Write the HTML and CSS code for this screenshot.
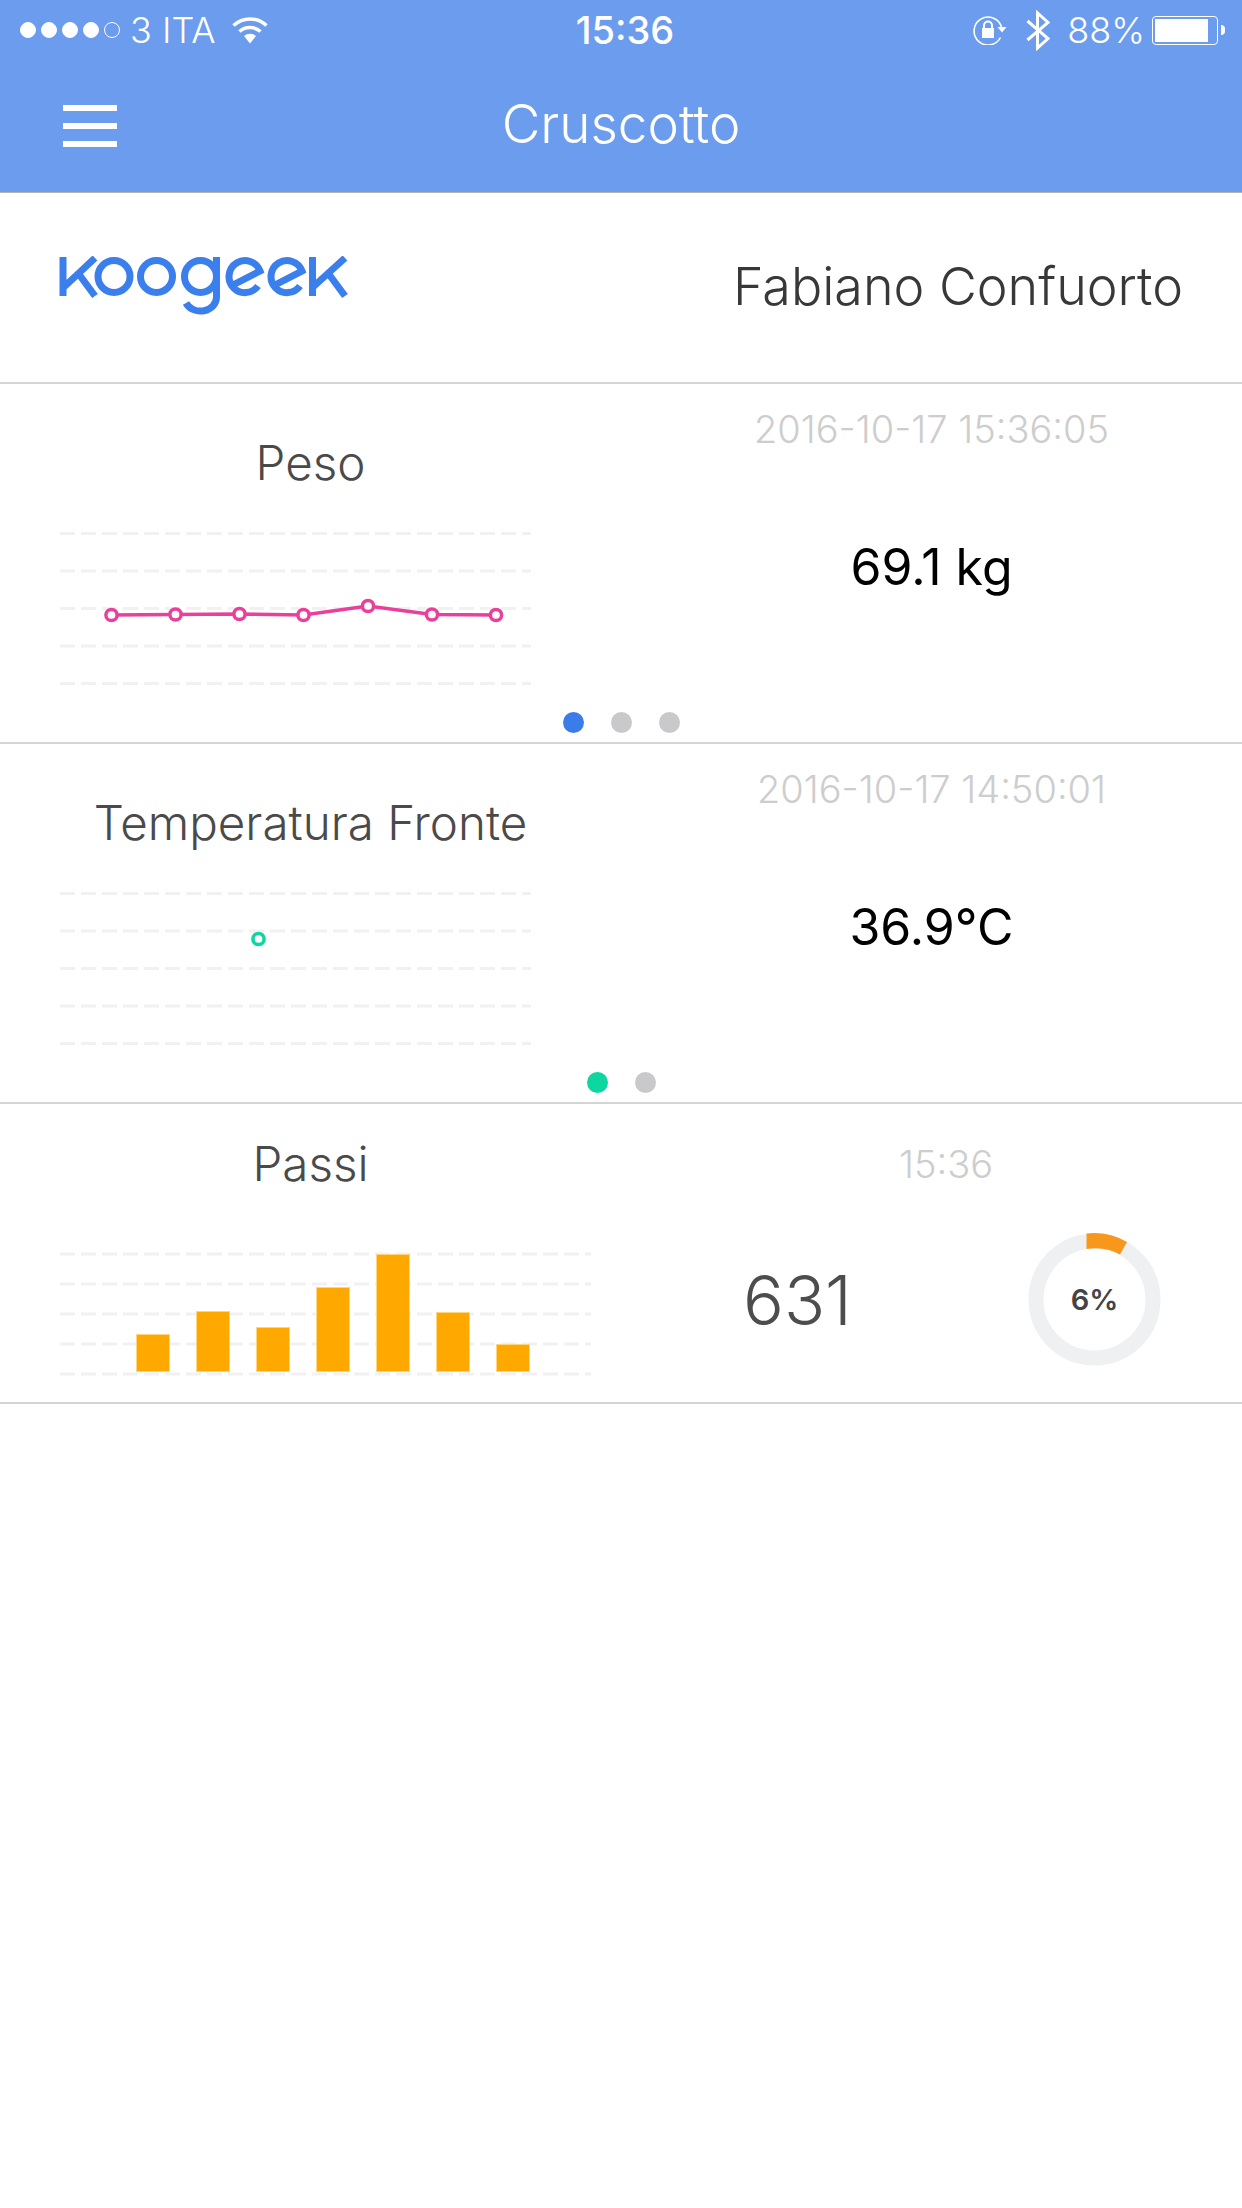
FILE: index.html
```html
<!DOCTYPE html>
<html lang="it">
<head>
    <meta charset="UTF-8">
    <meta name="viewport" content="width=device-width, initial-scale=1.0">
    <title>Cruscotto</title>
    <link rel="stylesheet" href="styles.css">
</head>
<body>
    <header class="topbar">
        <div class="status">
            <div class="status-left">
                <span class="signal">
                    <i class="on"></i><i class="on"></i><i class="on"></i><i class="on"></i><i></i>
                </span>
                <span class="carrier">3 ITA</span>
                <svg class="wifi" width="36" height="28" viewBox="0 0 36 28">
                    <path d="M1.5 9.5 A24 24 0 0 1 34.5 9.5" fill="none" stroke="#fff" stroke-width="3.6"/>
                    <path d="M7.5 15.5 A16 16 0 0 1 28.5 15.5" fill="none" stroke="#fff" stroke-width="3.6"/>
                    <path d="M12 20 L18 27.5 L24 20 A9 9 0 0 0 12 20 Z" fill="#fff"/>
                </svg>
            </div>
            <div class="clock">15:36</div>
            <div class="status-right">
                <svg class="lock" width="34" height="30" viewBox="0 0 34 30">
                    <path d="M27.5 22.5 A14 14 0 1 1 28.5 12" fill="none" stroke="#fff" stroke-width="1.6"/>
                    <path d="M24.5 12 H33.5 L29 17.5 Z" fill="#fff"/>
                    <rect x="9" y="13" width="12" height="10" fill="#fff"/>
                    <path d="M11 13 V10.5 A4 4 0 0 1 19 10.5 V13" fill="none" stroke="#fff" stroke-width="2"/>
                </svg>
                <svg class="bluetooth" width="24" height="41" viewBox="0 0 24 41">
                    <path d="M1.5 11 L22 28.5 L11.5 38 V3 L22 12.5 L1.5 30" fill="none" stroke="#fff" stroke-width="3"/>
                </svg>
                <span class="percent">88%</span>
                <span class="battery"><span class="battery-fill"></span></span>
                <span class="battery-tip"></span>
            </div>
        </div>
        <nav class="navbar">
            <div class="menu"><span></span><span></span><span></span></div>
            <h1>Cruscotto</h1>
        </nav>
    </header>

    <section class="profile">
        <svg class="logo" width="290" height="60" viewBox="59 257 290 60" role="img" aria-label="koogeek">
            <g fill="none" stroke="#3a7fec" stroke-width="7">
                <path d="M63 258 V297 M95 259 L64 288 M78 274 L95 297"/>
                <circle cx="114" cy="277.5" r="16"/>
                <circle cx="156.5" cy="277.5" r="16"/>
                <circle cx="200.5" cy="277.5" r="16"/>
                <path d="M216.5 258 V298 A16 14 0 0 1 186 304"/>
                <path d="M231 287 L260 272 A16 16 0 1 0 258 287"/>
                <path d="M273 287 L302 272 A16 16 0 1 0 300 287"/>
                <path d="M312.5 258 V297 M345 259 L313 288 M328 274 L345 297"/>
            </g>
        </svg>
        <div class="user-name">Fabiano Confuorto</div>
    </section>

    <section class="row">
        <div class="row-main">
            <div class="col-left">
                <h2>Peso</h2>
                <svg class="chart" width="471" height="170" viewBox="0 0 471 170">
                    <g class="grid-lines">
                        <line x1="0" x2="471" y1="10.5" y2="10.5"/>
                        <line x1="0" x2="471" y1="48" y2="48"/>
                        <line x1="0" x2="471" y1="85.5" y2="85.5"/>
                        <line x1="0" x2="471" y1="123" y2="123"/>
                        <line x1="0" x2="471" y1="160.5" y2="160.5"/>
                    </g>
                    <polyline class="line-pink" points="51.5,92 115.5,91.5 179.5,91 243.5,92 308,83 372,91.5 436,92"/>
                    <g class="points-pink">
                        <circle cx="51.5" cy="92" r="5.6"/>
                        <circle cx="115.5" cy="91.5" r="5.6"/>
                        <circle cx="179.5" cy="91" r="5.6"/>
                        <circle cx="243.5" cy="92" r="5.6"/>
                        <circle cx="308" cy="83" r="5.6"/>
                        <circle cx="372" cy="91.5" r="5.6"/>
                        <circle cx="436" cy="92" r="5.6"/>
                    </g>
                </svg>
            </div>
            <div class="col-right">
                <div class="stamp">2016-10-17 15:36:05</div>
                <div class="reading">69.1 kg</div>
            </div>
        </div>
        <div class="pager">
            <span class="dot dot-blue"></span><span class="dot"></span><span class="dot"></span>
        </div>
    </section>

    <section class="row">
        <div class="row-main">
            <div class="col-left">
                <h2>Temperatura Fronte</h2>
                <svg class="chart" width="471" height="170" viewBox="0 0 471 170">
                    <g class="grid-lines">
                        <line x1="0" x2="471" y1="10.5" y2="10.5"/>
                        <line x1="0" x2="471" y1="48" y2="48"/>
                        <line x1="0" x2="471" y1="85.5" y2="85.5"/>
                        <line x1="0" x2="471" y1="123" y2="123"/>
                        <line x1="0" x2="471" y1="160.5" y2="160.5"/>
                    </g>
                    <circle class="point-green" cx="198.5" cy="56" r="5.6"/>
                </svg>
            </div>
            <div class="col-right">
                <div class="stamp">2016-10-17 14:50:01</div>
                <div class="reading">36.9°C</div>
            </div>
        </div>
        <div class="pager">
            <span class="dot dot-green"></span><span class="dot"></span>
        </div>
    </section>

    <section class="row row-steps">
        <div class="col-left">
            <h2>Passi</h2>
            <svg class="chart" width="531" height="140" viewBox="0 0 531 140">
                <g class="grid-lines">
                    <line x1="0" x2="531" y1="10" y2="10"/>
                    <line x1="0" x2="531" y1="40" y2="40"/>
                    <line x1="0" x2="531" y1="70" y2="70"/>
                    <line x1="0" x2="531" y1="100" y2="100"/>
                    <line x1="0" x2="531" y1="130" y2="130"/>
                </g>
                <g class="bars">
                    <rect x="76.5" y="90.5" width="33" height="37"/>
                    <rect x="136.5" y="67.5" width="33" height="60"/>
                    <rect x="196.5" y="83.5" width="33" height="44"/>
                    <rect x="256.5" y="43.5" width="33" height="84"/>
                    <rect x="316.5" y="10.5" width="33" height="117"/>
                    <rect x="376.5" y="68.5" width="33" height="59"/>
                    <rect x="436.5" y="100.5" width="33" height="27"/>
                </g>
            </svg>
        </div>
        <div class="col-steps">
            <div class="stamp">15:36</div>
            <div class="steps-body">
                <div class="steps-count">631</div>
                <svg class="ring" width="133" height="133" viewBox="0 0 133 133">
                    <circle cx="66.5" cy="66.5" r="58.5" fill="none" stroke="#eff0f2" stroke-width="15"/>
                    <path d="M58.5 0.5 A66 66 0 0 1 99 9 L92 21.5 A51 51 0 0 0 58.5 16 Z" fill="#f7981c"/>
                    <text class="ring-label" x="66.5" y="77" text-anchor="middle">6%</text>
                </svg>
            </div>
        </div>
    </section>
</body>
</html>
```

FILE: styles.css
```css
body {
    margin: 0;
    background: #fff;
    font-family: Inter, Roboto, "Liberation Sans", sans-serif;
    font-weight: 300;
}
.topbar {
    background: #6c9cee;
    color: #fff;
    border-bottom: 1px solid #b4b4b4;
}
.status {
    height: 60px;
    display: grid;
    grid-template-columns: 1fr auto 1fr;
    align-items: center;
    font-size: 36px;
}
.status-left {
    display: flex;
    align-items: center;
    padding-left: 20px;
}
.signal {
    display: flex;
    gap: 5px;
    margin-right: 10px;
}
.signal i {
    width: 14px;
    height: 14px;
    border: 1px solid #fff;
    border-radius: 50%;
}
.signal i.on {
    background: #fff;
}
.wifi {
    margin-left: 17px;
}
.clock {
    padding-left: 8px;
    font-size: 38px;
    font-weight: 500;
    text-align: center;
}
.status-right {
    display: flex;
    align-items: center;
    justify-content: flex-end;
    padding-right: 17px;
}
.bluetooth {
    margin-left: 19px;
}
.percent {
    margin-left: 17px;
}
.battery {
    box-sizing: border-box;
    width: 66px;
    height: 29px;
    margin-left: 7px;
    padding: 2px;
    border: 1px solid #fff;
    border-radius: 4px;
    display: block;
}
.battery-fill {
    display: block;
    width: 88%;
    height: 100%;
    background: #fff;
}
.battery-tip {
    width: 4px;
    height: 10px;
    margin-left: 3px;
    background: #fff;
    border-radius: 0 4px 4px 0;
}
.navbar {
    height: 132px;
    position: relative;
    display: flex;
    align-items: center;
    justify-content: center;
}
.navbar h1 {
    margin: 0 0 4px;
    font-size: 53px;
    font-weight: 300;
}
.menu {
    position: absolute;
    left: 63px;
    top: 45px;
    display: flex;
    flex-direction: column;
    gap: 12px;
}
.menu span {
    display: block;
    width: 54px;
    height: 6px;
    background: #fff;
}
.profile {
    height: 189px;
    display: flex;
    align-items: center;
    justify-content: space-between;
    padding: 0 59px 0 59px;
    border-bottom: 2px solid #d4d4d4;
}
.logo {
    margin-bottom: 4px;
}
.user-name {
    margin-bottom: 2px;
    font-size: 52px;
    font-weight: 350;
    color: #383838;
}
.row {
    height: 358px;
    border-bottom: 2px solid #d4d4d4;
    display: flex;
    flex-direction: column;
}
.row-main {
    height: 327px;
    display: grid;
    grid-template-columns: 621px 621px;
}
.col-left h2 {
    margin: 0;
    padding-top: 49px;
    font-size: 47.5px;
    line-height: 60px;
    font-weight: 350;
    color: #4a4a4a;
    text-align: center;
}
.chart {
    display: block;
    margin: 30px 0 0 60px;
}
.grid-lines line {
    stroke: #f1f1f1;
    stroke-width: 3;
    stroke-dasharray: 15 6;
}
.line-pink {
    fill: none;
    stroke: #e9409c;
    stroke-width: 3.5;
}
.points-pink circle {
    fill: #fff;
    stroke: #e9409c;
    stroke-width: 3.5;
}
.point-green {
    fill: #fff;
    stroke: #0dd6a0;
    stroke-width: 3.5;
}
.col-right {
    text-align: center;
}
.stamp {
    padding-top: 20px;
    font-size: 38px;
    line-height: 50px;
    color: #cdcdcd;
    text-align: center;
}
.reading {
    margin-top: 88px;
    font-size: 50px;
    line-height: 50px;
    font-weight: 400;
    color: #000;
}
.pager {
    display: flex;
    justify-content: center;
    gap: 27px;
    padding-top: 1px;
}
.dot {
    width: 21px;
    height: 21px;
    border-radius: 50%;
    background: #c9c9cb;
}
.dot-blue {
    background: #3b7de8;
}
.dot-green {
    background: #0dd6a0;
}
.row-steps {
    height: 298px;
    display: grid;
    grid-template-columns: 621px 621px;
}
.row-steps .col-left h2 {
    padding-top: 30px;
}
.row-steps .chart {
    margin-top: 50px;
}
.row-steps .stamp {
    padding-top: 35px;
    padding-left: 29px;
}
.bars rect {
    fill: #ffa900;
    stroke: #ffd680;
    stroke-width: 1;
}
.steps-body {
    display: flex;
    align-items: center;
    margin-top: 44px;
    padding-left: 122px;
}
.steps-count {
    width: 285px;
    font-size: 68px;
    color: #4d4d4d;
}
.ring-label {
    font-size: 29px;
    font-weight: 600;
    fill: #444;
}
```
